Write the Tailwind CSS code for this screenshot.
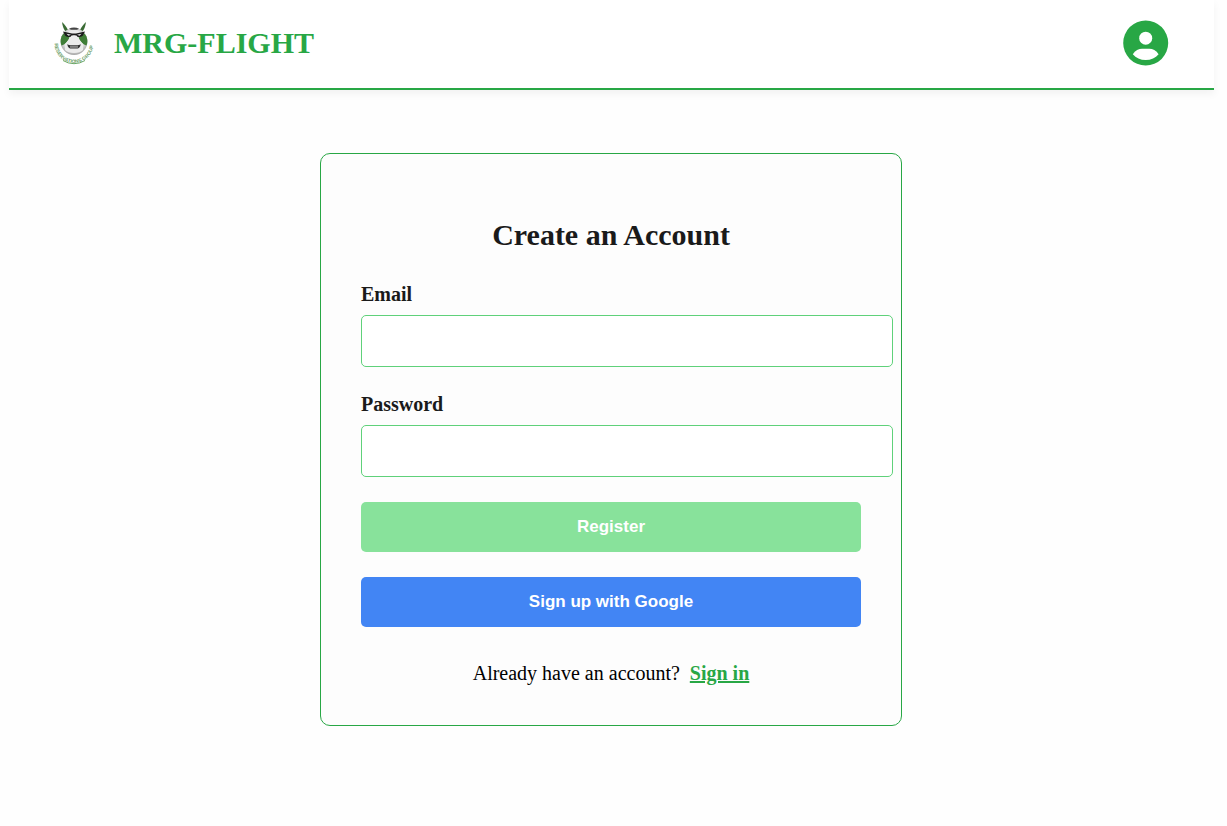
<!DOCTYPE html>
<html lang="en">
<head>
<meta charset="utf-8">
<meta name="viewport" content="width=device-width, initial-scale=1">
<title>MRG-FLIGHT</title>
<script src="https://cdn.jsdelivr.net/npm/@tailwindcss/browser@4"></script>
</head>
<body class="bg-[#fefefe] pr-[13px] pl-[9px] font-['Liberation_Serif',serif] text-xl leading-6 text-black">
<header class="flex items-center justify-between border-b-2 border-[#28a745] bg-white px-[45px] pt-5 pb-[22px] shadow-[0_4px_8px_rgba(0,0,0,0.05)]">
  <a href="#" class="flex items-center gap-5 text-[#28a745]">
    <svg class="h-11 w-10" viewBox="0 0 40 44" aria-hidden="true">
      <defs>
        <radialGradient id="face" cx="0.5" cy="0.45" r="0.58">
          <stop offset="0" stop-color="#ffffff"/>
          <stop offset="0.65" stop-color="#e6e6e6"/>
          <stop offset="1" stop-color="#999999"/>
        </radialGradient>
        <path id="arc" d="M.5 22.500A19.500 19.500 0 0 0 39.500 22.500"/>
      </defs>
      <path d="M8 1c2.500 2.500 4.500 4.500 6 8l-2.500 1.500C9.500 8 8.500 5 8 1z" fill="#3b6b35"/>
      <path d="M32 1c-2.500 2.500-4.500 4.500-6 8l2.500 1.500C30.500 8 31.500 5 32 1z" fill="#3b6b35"/>
      <circle cx="20" cy="20.500" r="13.400" fill="url(#face)"/>
      <path d="M9.500 12.500C6.300 16 6 21 7.500 24.500c3.500-1 6.500-4 8-8z" fill="#3f7d37"/>
      <path d="M30.500 12.500C33.700 16 34 21 32.500 24.500c-3.500-1-6.500-4-8-8z" fill="#3f7d37"/>
      <path d="M15 7.700c3-1.500 7-1.500 10 0l-2 1h-6z" fill="#444"/>
      <path d="M9 10.500l9 2h4l9-2-2 4c-3 2-5.500 2-8 0h-2c-2.500 2-5 2-8 0z" fill="#1b1b1b"/>
      <path d="M12.500 12.800l4.500 1-2.500 1zM27.500 12.800l-4.500 1 2.500 1z" fill="#eee"/>
      <path d="M17.500 14.500h5l3 4.500 3.500 4v6c-3 4-15 4-18 0v-6l3.500-4z" fill="#ececec"/>
      <path d="M13.500 23c1 1.500 3 1.300 6.500 1.300s5.500.2 6.500-1.300c.3 2.600-1.500 4.600-3.500 4.600h-6c-2 0-3.800-2-3.500-4.600z" fill="#333"/>
      <path d="M16 25.400h8v1.100h-8z" fill="#bbb"/>
      <path d="M9 39.500A20.500 20.500 0 0 0 31 39.500" fill="none" stroke="#6aa665" stroke-width="1"/>
      <text font-family="Liberation Sans, sans-serif" font-size="5" font-weight="bold" fill="#6f9f6b"><textPath href="#arc">RESERVATIONS GROUP</textPath></text>
    </svg>
    <span class="text-3xl font-bold">MRG-FLIGHT</span>
  </a>
  <button type="button" aria-label="Account" class="rounded-full">
    <svg class="size-[46px]" viewBox="0 0 46 46" aria-hidden="true">
      <circle cx="22.700" cy="23" r="22.500" fill="#28a745"/>
      <circle cx="22.700" cy="18.200" r="6.500" fill="#fff"/>
      <path d="M9.800 34.200C12 30.500 16 28.800 19 28.800h7.400c3 0 7 1.700 9.200 5.400C32.500 38 28 40 22.700 40S12.900 38 9.800 34.200z" fill="#fff"/>
    </svg>
  </button>
</header>
<main class="flex justify-center pt-[63px] pr-px">
  <form class="flex w-[582px] flex-col rounded-[10px] border border-[#28a745] bg-[#fdfdfd] p-10">
    <h1 class="mt-[23px] mb-7 text-center text-3xl font-bold text-[#1a1a1a]">Create an Account</h1>
    <label for="email" class="mb-[9px] pt-px font-bold text-[#1a1a1a]">Email</label>
    <input id="email" type="email" class="mb-6 box-content h-5 w-full rounded-[5px] border border-[#5fd17a] bg-white p-[15px]">
    <label for="password" class="mb-[9px] pt-px font-bold text-[#1a1a1a]">Password</label>
    <input id="password" type="password" class="mb-[25px] box-content h-5 w-full rounded-[5px] border border-[#5fd17a] bg-white p-[15px]">
    <button type="submit" class="mb-[25px] h-[50px] rounded-[5px] bg-[#88e29b] pb-px font-['Liberation_Sans',sans-serif] text-[17px] font-bold text-white">Register</button>
    <button type="button" class="mb-[34px] h-[50px] rounded-[5px] bg-[#4285f4] pb-px font-['Liberation_Sans',sans-serif] text-[17px] font-bold text-white">Sign up with Google</button>
    <p class="flex justify-center gap-[10px]">Already have an account? <a href="#" class="font-bold text-[#28a745] underline">Sign in</a></p>
  </form>
</main>
</body>
</html>
